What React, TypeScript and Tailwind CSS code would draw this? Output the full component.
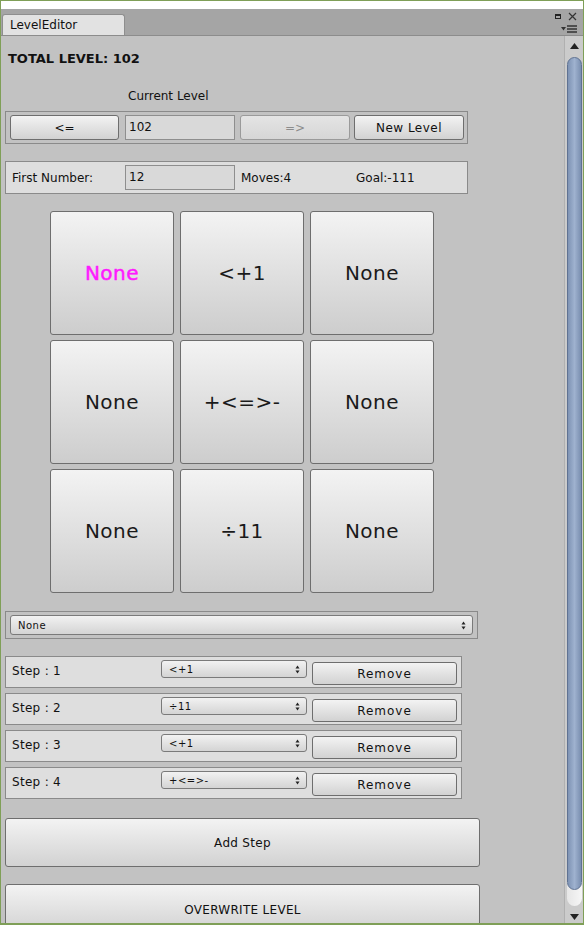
import React from 'react';

const font = "font-['DejaVu_Sans',sans-serif]";

function UpDown() {
  return (
    <svg width="5" height="9" viewBox="0 0 5 9" className="shrink-0">
      <path d="M2.5 0.5 L4.5 3.5 H0.5 Z" fill="#222" />
      <path d="M2.5 8.5 L4.5 5.5 H0.5 Z" fill="#222" />
    </svg>
  );
}

function Btn({ label, className = '', disabled = false }: { label: string; className?: string; disabled?: boolean }) {
  return (
    <div
      className={`flex shrink-0 items-center justify-center rounded-[3px] border bg-gradient-to-b ${
        disabled
          ? 'border-[#9a9a9a] from-[#e4e4e4] to-[#d6d6d6] text-[#8c8c8c]'
          : 'border-[#6e6e6e] from-[#f3f3f3] to-[#d2d2d2] text-[#111]'
      } ${className}`}
    >
      {label}
    </div>
  );
}

function Dropdown({ label, className = '' }: { label: string; className?: string }) {
  return (
    <div
      className={`flex shrink-0 items-center justify-between rounded-[3px] border border-[#7a7a7a] bg-gradient-to-b from-[#f2f2f2] to-[#d4d4d4] pl-[7px] pr-[6px] text-[10px] text-[#111] ${className}`}
    >
      <span className="tracking-[0.5px]">{label}</span>
      <UpDown />
    </div>
  );
}

function Field({ value }: { value: string }) {
  return (
    <div className="flex h-[25px] w-[110px] shrink-0 items-start border border-[#8e8e8e] bg-[#d9d9d9] px-[3px] pt-[2px] text-[12px] text-[#111]">
      {value}
    </div>
  );
}

const grid = ['None', '<+1', 'None', 'None', '+<=>-', 'None', 'None', '÷11', 'None'];
const steps = ['<+1', '÷11', '<+1', '+<=>-'];

export default function App() {
  return (
    <div className={`${font} flex h-[925px] w-[584px] flex-col overflow-hidden border-x border-t border-b-2 border-[#7f9f57] bg-white`}>
      {/* title strip */}
      <div className="h-[8px] shrink-0 bg-white" />
      <div className="relative flex h-[27px] shrink-0 items-end border-b border-[#8c8c8c] bg-[#a5a5a5]">
        <div className="ml-[1px] flex h-[21px] w-[123px] items-center rounded-t-[3px] border border-b-0 border-[#8e8e8e] bg-[#e2e2e2] pl-[7px] text-[12px] text-[#111]">
          LevelEditor
        </div>
        <div className="absolute right-[6px] top-[3px] flex items-center gap-[7px]">
          <div className="h-[5px] w-[6px] border border-[#222] border-t-2" />
          <svg width="9" height="9" viewBox="0 0 9 9">
            <path d="M1 1 L8 8 M8 1 L1 8" stroke="#333" strokeWidth="1.2" />
          </svg>
        </div>
        <div className="absolute bottom-[2px] right-[6px] flex items-center gap-[1px]">
          <svg width="5" height="4" viewBox="0 0 5 4">
            <path d="M0 0 H5 L2.5 3.5 Z" fill="#333" />
          </svg>
          <svg width="10" height="8" viewBox="0 0 10 8">
            <path d="M0 1 H10 M0 4 H10 M0 7 H10" stroke="#333" strokeWidth="1.3" />
          </svg>
        </div>
      </div>

      {/* content + scrollbar */}
      <div className="flex min-h-0 flex-1 overflow-hidden bg-[#c2c2c2]">
        <div className="flex flex-1 flex-col pl-[4px] text-[12px] text-[#111] [&>*]:shrink-0">
          <div className="ml-[3px] mt-[15px] text-[13px] font-bold leading-[16px]">TOTAL LEVEL: 102</div>
          <div className="ml-[123px] mt-[21px] leading-[16px]">Current Level</div>

          <div className="mt-[7px] flex h-[33px] w-[463px] items-center border border-[#8a8a8a] pl-[4px]">
            <Btn label="<=" className="h-[25px] w-[109px]" />
            <div className="ml-[6px]">
              <Field value="102" />
            </div>
            <Btn label="=>" disabled className="ml-[5px] h-[25px] w-[110px]" />
            <Btn label="New Level" className="ml-[4px] h-[25px] w-[110px] tracking-[0.5px]" />
          </div>

          <div className="mt-[17px] flex h-[33px] w-[463px] items-center border border-[#8a8a8a] bg-[#dedede] pl-[6px]">
            <span className="w-[113px]">First Number:</span>
            <Field value="12" />
            <span className="ml-[6px] w-[115px]">Moves:4</span>
            <span>Goal:-111</span>
          </div>

          <div className="ml-[45px] mt-[17px] grid grid-cols-[124px_124px_124px] gap-x-[6px] gap-y-[5px]">
            {grid.map((g, i) => (
              <div
                key={i}
                className={`flex h-[124px] items-center justify-center rounded-[3px] border border-[#6e6e6e] bg-gradient-to-b from-[#f3f3f3] to-[#cdcdcd] text-[20px] tracking-[0.5px] ${
                  i === 0 ? 'text-[#ff1aff] [-webkit-text-stroke:0.5px_#ff1aff]' : 'text-[#1a1a1a]'
                }`}
              >
                {g}
              </div>
            ))}
          </div>

          <div className="mt-[18px] flex h-[28px] w-[473px] items-center border border-[#8a8a8a] px-[4px]">
            <Dropdown label="None" className="h-[20px] w-full" />
          </div>

          <div className="mt-[17px] flex flex-col gap-[5px]">
            {steps.map((s, i) => (
              <div key={i} className="flex h-[32px] w-[457px] shrink-0 items-center border border-[#8a8a8a] bg-[#dedede] pl-[6px]">
                <span className="mb-[3px] w-[149px] tracking-[0.3px]">Step : {i + 1}</span>
                <Dropdown label={s} className="mb-[6px] h-[18px] w-[146px]" />
                <Btn label="Remove" className="ml-[5px] mt-[3px] h-[23px] w-[145px] tracking-[1px]" />
              </div>
            ))}
          </div>

          <Btn label="Add Step" className="mt-[19px] h-[49px] w-[475px] tracking-[0.3px]" />
          <div className="mt-[17px] flex h-[49px] w-[475px] items-start justify-center rounded-[3px] border border-[#6e6e6e] bg-gradient-to-b from-[#f3f3f3] to-[#d2d2d2] pt-[16px] tracking-[0.3px]">
            OVERWRITE LEVEL
          </div>
        </div>

        {/* scrollbar */}
        <div className="flex w-[19px] shrink-0 flex-col items-center border-l border-[#b0b0b0] bg-[#cbcbcb] [&>*]:shrink-0">
          <svg width="9" height="6" viewBox="0 0 9 6" className="mt-[7px]">
            <path d="M4.5 0 L9 6 H0 Z" fill="#222" />
          </svg>
          <div className="relative z-10 mt-[8px] h-[833px] w-[15px] rounded-full border border-[#5f7292] bg-gradient-to-r from-[#7e93b4] via-[#9fb2cf] to-[#7a8fb0]" />
          <div className="-mt-[10px] h-[26px] w-[15px] rounded-b-full bg-gradient-to-r from-[#e6e6e6] to-[#f6f6f6]" />
          <div className="flex-1" />
          <svg width="9" height="6" viewBox="0 0 9 6" className="mb-[3px]">
            <path d="M0 0 H9 L4.5 6 Z" fill="#222" />
          </svg>
        </div>
      </div>
    </div>
  );
}
